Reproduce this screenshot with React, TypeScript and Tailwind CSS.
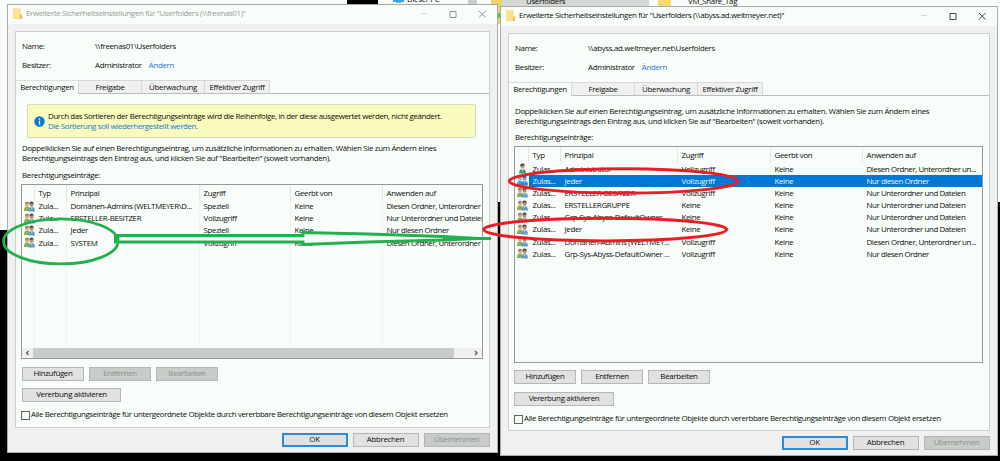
import React from 'react';

interface Entry {
    typ: string;
    principal: string;
    access: string;
    inherited: string;
    target: string;
    single?: boolean;
    selected?: boolean;
}

interface ListProps {
    columns: string;
    entries: Entry[];
    height: string;
    scrollbar?: boolean;
}

interface DialogProps {
    title: string;
    path: string;
    active?: boolean;
    className: string;
    children: React.ReactNode;
}

const LEFT_ENTRIES: Entry[] = [
    { typ: 'Zula...', principal: 'Domänen-Admins (WELTMEYER\\D...', access: 'Speziell', inherited: 'Keine', target: 'Diesen Ordner, Unterordner' },
    { typ: 'Zula...', principal: 'ERSTELLER-BESITZER', access: 'Vollzugriff', inherited: 'Keine', target: 'Nur Unterordner und Dateien' },
    { typ: 'Zula...', principal: 'Jeder', access: 'Speziell', inherited: 'Keine', target: 'Nur diesen Ordner' },
    { typ: 'Zula...', principal: 'SYSTEM', access: 'Vollzugriff', inherited: 'Keine', target: 'Diesen Ordner, Unterordner' },
];

const RIGHT_ENTRIES: Entry[] = [
    { typ: 'Zulas...', principal: 'Administrator', access: 'Vollzugriff', inherited: 'Keine', target: 'Diesen Ordner, Unterordner un...', single: true },
    { typ: 'Zulas...', principal: 'Jeder', access: 'Vollzugriff', inherited: 'Keine', target: 'Nur diesen Ordner', selected: true },
    { typ: 'Zulas...', principal: 'ERSTELLER-BESITZER', access: 'Vollzugriff', inherited: 'Keine', target: 'Nur Unterordner und Dateien' },
    { typ: 'Zulas...', principal: 'ERSTELLERGRUPPE', access: 'Keine', inherited: 'Keine', target: 'Nur Unterordner und Dateien' },
    { typ: 'Zulas...', principal: 'Grp-Sys-Abyss-DefaultOwner...', access: 'Keine', inherited: 'Keine', target: 'Nur Unterordner und Dateien' },
    { typ: 'Zulas...', principal: 'Jeder', access: 'Keine', inherited: 'Keine', target: 'Nur Unterordner und Dateien' },
    { typ: 'Zulas...', principal: 'Domänen-Admins (WELTMEY...', access: 'Vollzugriff', inherited: 'Keine', target: 'Diesen Ordner, Unterordner un...' },
    { typ: 'Zulas...', principal: 'Grp-Sys-Abyss-DefaultOwner ...', access: 'Vollzugriff', inherited: 'Keine', target: 'Nur diesen Ordner' },
];

const FolderIcon = ({ className }: { className: string }) => (
    <svg viewBox="0 0 9 11" className={className}>
        <path d="M0 .5h7.5v6H9V11H0z" fill="#f5d774" />
        <path d="M0 .5h6.5v10H0z" fill="#fbe394" />
        <path d="M7.5 6.5H9V11H7z" fill="#e8bd4d" />
    </svg>
);

const UserIcon = ({ single, selected }: { single?: boolean; selected?: boolean }) => (
    <svg viewBox="0 0 11 11" className="h-[11px] w-[11px] shrink-0">
        {single ? (
            <>
                <path d="M2 10.5c0-3 1-4.500 3.500-4.500S9 7.500 9 10.500z" fill="#3f9a70" />
                <path d="M4.700 6h1.600l-.8 2.500z" fill="#edf5ee" />
                <circle cx="5.500" cy="3.700" r="2" fill="#c49c78" />
                <path d="M3.400 3.400C3 1 4 .4 5.500.4s2.500.8 2.100 3L6.600 2.200z" fill="#4c3c33" />
            </>
        ) : (
            <>
                <path d="M0 10c0-3 .8-4.400 3-4.400S6 7 6 10z" fill={selected ? '#4c9fd8' : '#8cae55'} />
                <circle cx="3.100" cy="3.700" r="1.900" fill={selected ? '#95b8c8' : '#cfad83'} />
                <path d="M1.100 3.500C.8 1.500 1.700.7 3.100.7s2 .7 1.900 1.800L3 2.300z" fill={selected ? '#467ca2' : '#8c744a'} />
                <path d="M4.300 10.500c0-3 1-4.400 3.400-4.400s3.200 1.400 3.200 4.400z" fill={selected ? '#2589d2' : '#659bc9'} />
                <path d="M7 6.200h1.500l-.8 2z" fill="#dcebf0" />
                <circle cx="7.600" cy="3.900" r="1.900" fill={selected ? '#7fa2b7' : '#b98d69'} />
                <path d="M5.500 3.500C5.200 1.200 6.200.5 7.600.5s2.300.8 2 2.800L8 2.200z" fill={selected ? '#205b88' : '#51443c'} />
            </>
        )}
    </svg>
);

const WindowControls = ({ active }: { active?: boolean }) => (
    <svg viewBox="0 0 67 10" fill="none" className={`ml-auto h-[10px] w-[67px] ${active ? 'text-[#303330]' : 'text-[#858985]'}`}>
        <path d="M1 4.500h6" stroke="#d2d6d2" />
        <path d="M30 2.500h6v6h-6z" stroke="currentColor" strokeWidth=".9" />
        <path d="M59 2l6.500 6.500M65.500 2l-6.500 6.500" stroke="currentColor" strokeWidth=".9" />
    </svg>
);

const Button = ({ label, width, disabled, primary }: { label: string; width: string; disabled?: boolean; primary?: boolean }) => (
    <button
        disabled={disabled}
        className={`flex h-[14px] shrink-0 items-center justify-center ${width}
            ${primary ? 'border-2 border-[#2e8ad6]' : 'border border-[#b4b7b4]'}
            ${disabled ? 'bg-[#c8ccc8] text-[#8d918d]' : 'bg-[#e1e1e1]'}`}
    >
        {label}
    </button>
);

const Tabs = () => (
    <div className="flex h-[14px] text-center leading-[12px]">
        <div className="w-[62px] border-t border-[#dcdfdc] bg-[#f9fdf9]">Berechtigungen</div>
        <div className="w-[64px] border border-[#d5d8d5] border-b-[#b9bdb9] bg-[#f0f0f0]">Freigabe</div>
        <div className="w-[63px] border border-l-0 border-[#d5d8d5] border-b-[#b9bdb9] bg-[#f0f0f0]">Überwachung</div>
        <div className="w-[65px] border border-l-0 border-[#d5d8d5] border-b-[#b9bdb9] bg-[#f0f0f0]">Effektiver Zugriff</div>
        <div className="flex-1 border-b border-[#b9bdb9]" />
    </div>
);

const EntryList = ({ columns, entries, height, scrollbar }: ListProps) => (
    <div className={`-ml-px flex flex-col overflow-hidden border border-[#969b96] ${height}`}>
        <div className={`grid shrink-0 items-center ${scrollbar ? 'h-[15px]' : 'h-[15.500px]'} ${columns}`}>
            {['', 'Typ', 'Prinzipal', 'Zugriff', 'Geerbt von', 'Anwenden auf'].map((head, i) => (
                <div key={i} className="h-full border-r border-[#e3e8e6] pl-[3.500px] leading-[16px] whitespace-nowrap last:border-r-0">{head}</div>
            ))}
        </div>
        {entries.map((entry, i) => (
            <div key={i} className={`grid h-[12.180px] shrink-0 items-center leading-[12px] whitespace-nowrap ${columns}`}>
                <div className="flex h-full items-center pl-[2px]">
                    <UserIcon single={entry.single} selected={entry.selected} />
                </div>
                {[entry.typ, entry.principal, entry.access, entry.inherited, entry.target].map((value, j) => (
                    <div
                        key={j}
                        className={`h-full pl-[3.500px] last:tracking-[-0.4px] ${entry.selected ? 'bg-[#0078d7] text-[#e9f5ff]' : ''} ${scrollbar && j < 4 ? 'border-r border-[#edf5f8]' : ''}`}
                    >
                        {value}
                    </div>
                ))}
            </div>
        ))}
        {scrollbar ? (
            <>
                <div className={`grid flex-1 ${columns}`}>
                    {[0, 1, 2, 3, 4].map(i => <div key={i} className="border-r border-[#edf5f8]" />)}
                </div>
                <div className="flex h-[10px] shrink-0 items-center bg-[#f0f0f0]">
                    <svg viewBox="0 0 11 10" className="h-[10px] w-[11px]" fill="none">
                        <path d="M6.500 3L4.500 5l2 2" stroke="#555955" strokeWidth="1.200" />
                    </svg>
                    <div className="h-full w-[421px] bg-[#c8ccc8]" />
                    <svg viewBox="0 0 11 10" className="ml-auto h-[10px] w-[11px]" fill="none">
                        <path d="M4 3l2 2-2 2" stroke="#555955" strokeWidth="1.200" />
                    </svg>
                </div>
            </>
        ) : null}
    </div>
);

const Checkbox = () => (
    <label className="-ml-px flex h-[10px] items-center gap-[1px] tracking-[-0.35px] whitespace-nowrap">
        <span className="h-[9px] w-[9px] border border-[#626662]" />
        Alle Berechtigungseinträge für untergeordnete Objekte durch vererbbare Berechtigungseinträge von diesem Objekt ersetzen
    </label>
);

const Description = () => (
    <p className="leading-[10px] whitespace-nowrap">
        Doppelklicken Sie auf einen Berechtigungseintrag, um zusätzliche Informationen zu erhalten. Wählen Sie zum Ändern eines
        <br />
        Berechtigungseintrags den Eintrag aus, und klicken Sie auf "Bearbeiten" (soweit vorhanden).
    </p>
);

const Dialog = ({ title, path, active, className, children }: DialogProps) => (
    <section className={`absolute flex flex-col border border-[#a9ada9] bg-[#f0f0f0] ${className}`}>
        <header className="flex h-[19px] shrink-0 items-center bg-[#f9fdf9] pr-[10px] pb-[2px] pl-[5px]">
            <FolderIcon className="mr-[4px] h-[11px] w-[9px]" />
            <span className={`tracking-[-0.35px] whitespace-nowrap ${active ? '' : 'text-[#989c98]'}`}>{title}</span>
            <WindowControls active={active} />
        </header>
        <main className="mx-[7px] mt-[7px] flex flex-1 flex-col border border-[#cbcfcb] bg-[#f9fdf9]">
            <div className="flex h-[48px] shrink-0 flex-col gap-[8.500px] pt-[9px] pl-[6px] leading-[10px]">
                <div className="flex"><span className="w-[73px]">Name:</span><span>{path}</span></div>
                <div className="flex"><span className="w-[73px]">Besitzer:</span><span>Administrator</span><a className="ml-[7px] text-[#1878cf]">Ändern</a></div>
            </div>
            <Tabs />
            {children}
        </main>
        <footer className="flex h-[24px] shrink-0 items-start justify-end gap-[5px] pt-[5px] pr-[7.500px]">
            <Button label="OK" width="w-[66px]" primary />
            <Button label="Abbrechen" width="w-[66px]" />
            <Button label="Übernehmen" width="w-[66px]" disabled />
        </footer>
    </section>
);

const Annotations = () => (
    <svg viewBox="0 0 1000 461" fill="none" className="pointer-events-none absolute inset-0 h-[461px] w-[1000px]">
        <g stroke="#22b14c" strokeWidth="2.900">
            <ellipse cx="60.800" cy="241.400" rx="57.200" ry="22.500" />
            <path d="M118 235.500h185v-3l65 1.500 75 2.500 35 2-35 1.500-75 2-65 2.500v-2.500H118z" fill="#f9fdf9" />
            <path d="M443 238.500h48" strokeWidth="3.200" />
            <path d="M116.500 234v9.500" strokeWidth="5" />
        </g>
        <g stroke="#ed1c24" strokeWidth="3">
            <ellipse cx="623.800" cy="181" rx="114.500" ry="12.200" />
            <ellipse cx="605.200" cy="229.600" rx="121.500" ry="11.300" />
        </g>
    </svg>
);

const App = () => (
    <div className="relative h-[461px] w-[1000px] overflow-hidden bg-black font-['Open_Sans','Noto_Sans',sans-serif] text-[7.900px] tracking-[-0.32px] text-[#0c0f0c]">
        {/* Explorer behind both dialogs */}
        <div className="flex h-[202px] bg-[#f9fdf9] leading-[7px] whitespace-nowrap">
            <div className="w-[347px]" />
            <div className="h-[5px] w-[31px] bg-black" />
            <svg viewBox="0 0 12 5" className="ml-[15px] h-[5px] w-[12px]">
                <path d="M0 0h11v2H0z" fill="#2ba6e8" />
                <path d="M3 2h5v1H3z" fill="#8ca4b0" />
            </svg>
            <span className="-mt-[4px] ml-[2px]">Dieser PC</span>
            <div className="ml-auto flex w-[532px]">
                <div className="h-[10px] w-[9px] bg-[#c8ccc8]" />
                <div className="ml-[14px] h-[24px] w-[11px] bg-[#f2d270]"><div className="mt-[13px] h-[5px] bg-[#40c85a]" /></div>
                <div className="h-[6px] w-[147px] bg-[#d5d8d5] pl-[24px]"><div className="-mt-[2px]">Userfolders</div></div>
                <div className="ml-[9px] h-[6px] w-[13px] bg-[#f7d96f]" />
                <span className="-mt-[2px] ml-[17px]">VM_Share_Tag</span>
            </div>
        </div>
        <div className="h-[28px] w-[8px] bg-[#f9fdf9]" />

        <Dialog
            title={'Erweiterte Sicherheitseinstellungen für "Userfolders (\\\\freenas01)"'}
            path={'\\\\freenas01\\Userfolders'}
            className="top-[4px] left-[7px] h-[449px] w-[491px]"
        >
            <div className="mt-[10px] mr-[13px] ml-[11px] flex h-[34px] shrink-0 items-center rounded-[2px] border border-[#d5d9bd] bg-[#f9fbbd] pl-[6px] leading-[10px] tracking-[-0.35px] whitespace-nowrap">
                <svg viewBox="0 0 11 11" className="mr-[3px] h-[11px] w-[11px]">
                    <circle cx="5.500" cy="5.500" r="5.200" fill="#087bd0" />
                    <path d="M5.500 2.300v1.500M5.500 4.800v4" stroke="white" strokeWidth="1.300" />
                </svg>
                <p>
                    Durch das Sortieren der Berechtigungseinträge wird die Reihenfolge, in der diese ausgewertet werden, nicht geändert.
                    <br />
                    <a className="text-[#1878cf]">Die Sortierung soll wiederhergestellt werden.</a>
                </p>
            </div>
            <div className="flex flex-1 flex-col pt-[5px] pr-[6px] pl-[6px]">
                <Description />
                <div className="mt-[7px] mb-[4px] leading-[10px]">Berechtigungseinträge:</div>
                <EntryList columns="grid-cols-[13px_32px_133px_91px_92px_1fr]" entries={LEFT_ENTRIES} height="h-[175px]" scrollbar />
                <div className="mt-[8px] flex gap-[5px]">
                    <Button label="Hinzufügen" width="w-[62px]" />
                    <Button label="Entfernen" width="w-[62px]" disabled />
                    <Button label="Bearbeiten" width="w-[62px]" disabled />
                </div>
                <div className="mt-[7px] mb-[8px]"><Button label="Vererbung aktivieren" width="w-[99px]" /></div>
                <Checkbox />
            </div>
        </Dialog>

        <Dialog
            title={'Erweiterte Sicherheitseinstellungen für "Userfolders (\\\\abyss.ad.weltmeyer.net)"'}
            path={'\\\\abyss.ad.weltmeyer.net\\Userfolders'}
            active
            className="top-[6px] left-[500px] h-[450px] w-[498px]"
        >
            <div className="flex flex-1 flex-col pt-[10px] pr-[6px] pl-[6px]">
                <Description />
                <div className="mt-[6px] mb-[4px] leading-[10px]">Berechtigungseinträge:</div>
                <EntryList columns="grid-cols-[14px_32px_117px_93px_92px_1fr]" entries={RIGHT_ENTRIES} height="h-[217px]" />
                <div className="mt-[7px] -ml-px flex gap-[5px]">
                    <Button label="Hinzufügen" width="w-[62px]" />
                    <Button label="Entfernen" width="w-[62px]" />
                    <Button label="Bearbeiten" width="w-[62px]" />
                </div>
                <div className="mt-[8px] mb-[8px] -ml-px"><Button label="Vererbung aktivieren" width="w-[100px]" /></div>
                <Checkbox />
            </div>
        </Dialog>

        {/* Hand-drawn markers */}
        <Annotations />
    </div>
);

export default App;
